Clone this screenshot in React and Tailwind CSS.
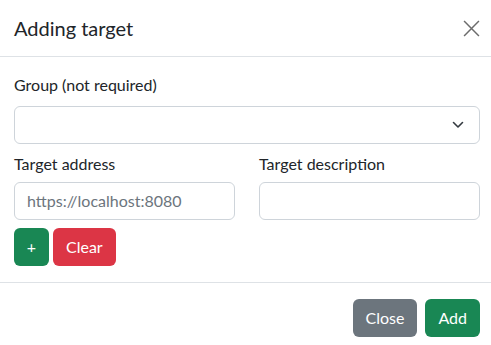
export default function App() {
  return (
    <div className="w-[491px] h-[345px] bg-white text-[#212529] overflow-hidden" style={{ fontFamily: 'Lato, "Noto Sans", sans-serif' }}>
      <div className="flex items-center justify-between h-[57px] pl-[14px] pr-[11px] border-b border-[#dee2e6]">
        <h5 className="text-[20px] leading-[24px] font-normal">Adding target</h5>
        <button className="w-[17px] h-[17px] flex items-center justify-center text-[#6c6c6c]">
          <svg width="17" height="17" viewBox="0 0 16 16" fill="none" stroke="currentColor" strokeWidth="1.4">
            <path d="M1 1L15 15M15 1L1 15" />
          </svg>
        </button>
      </div>
      <div className="pl-[14px] pr-[11px] pt-[16px] pb-[16px] text-[16px] leading-[24px]">
        <label className="block mb-[9px]">Group (not required)</label>
        <div className="h-[38px] border border-[#ced4da] rounded-[6px] flex items-center justify-end pr-[15px]">
          <svg width="12" height="8" viewBox="0 0 12 8" fill="none" stroke="#343a40" strokeWidth="1.6" strokeLinecap="round" strokeLinejoin="round">
            <path d="M1.5 1.5L6 6L10.5 1.5" />
          </svg>
        </div>
        <div className="grid grid-cols-2 gap-x-[24px] mt-[8px]">
          <div>
            <label className="block mb-[6px]">Target address</label>
            <div className="h-[38px] border border-[#ced4da] rounded-[6px] flex items-center px-[12px] text-[#6c757d]">https://localhost:8080</div>
          </div>
          <div>
            <label className="block mb-[6px]">Target description</label>
            <div className="h-[38px] border border-[#ced4da] rounded-[6px]"></div>
          </div>
        </div>
        <div className="flex gap-[4px] mt-[8px]">
          <button className="h-[38px] w-[35px] rounded-[6px] bg-[#198754] text-white">+</button>
          <button className="h-[38px] px-[13px] rounded-[6px] bg-[#dc3545] text-white">Clear</button>
        </div>
      </div>
      <div className="border-t border-[#dee2e6] flex justify-end gap-[8px] pl-[14px] pr-[11px] pt-[16px]">
        <button className="h-[38px] px-[13px] rounded-[6px] bg-[#6c757d] text-white text-[16px]">Close</button>
        <button className="h-[38px] px-[13px] rounded-[6px] bg-[#198754] text-white text-[16px]">Add</button>
      </div>
    </div>
  );
}
